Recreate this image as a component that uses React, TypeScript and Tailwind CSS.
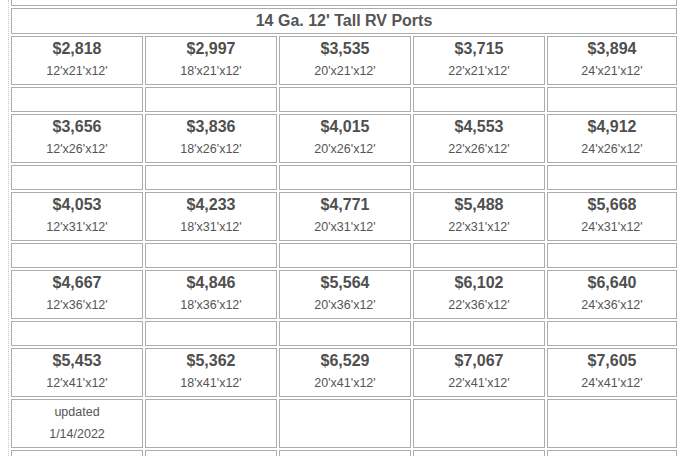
import React from "react";

const rows: { p: string; s: string }[][] = [
  [
    { p: "$2,818", s: "12'x21'x12'" },
    { p: "$2,997", s: "18'x21'x12'" },
    { p: "$3,535", s: "20'x21'x12'" },
    { p: "$3,715", s: "22'x21'x12'" },
    { p: "$3,894", s: "24'x21'x12'" },
  ],
  [
    { p: "$3,656", s: "12'x26'x12'" },
    { p: "$3,836", s: "18'x26'x12'" },
    { p: "$4,015", s: "20'x26'x12'" },
    { p: "$4,553", s: "22'x26'x12'" },
    { p: "$4,912", s: "24'x26'x12'" },
  ],
  [
    { p: "$4,053", s: "12'x31'x12'" },
    { p: "$4,233", s: "18'x31'x12'" },
    { p: "$4,771", s: "20'x31'x12'" },
    { p: "$5,488", s: "22'x31'x12'" },
    { p: "$5,668", s: "24'x31'x12'" },
  ],
  [
    { p: "$4,667", s: "12'x36'x12'" },
    { p: "$4,846", s: "18'x36'x12'" },
    { p: "$5,564", s: "20'x36'x12'" },
    { p: "$6,102", s: "22'x36'x12'" },
    { p: "$6,640", s: "24'x36'x12'" },
  ],
  [
    { p: "$5,453", s: "12'x41'x12'" },
    { p: "$5,362", s: "18'x41'x12'" },
    { p: "$6,529", s: "20'x41'x12'" },
    { p: "$7,067", s: "22'x41'x12'" },
    { p: "$7,605", s: "24'x41'x12'" },
  ],
];

const cell = "border border-[#acacac] bg-white";
const grid =
  "grid grid-cols-[132px_132px_132px_132px_130px] gap-[2px]";

export default function App() {
  return (
    <div
      className="w-[680px] h-[456px] overflow-hidden bg-white"
      style={{ fontFamily: '"Liberation Sans", Arial, sans-serif' }}
    >
      <div className="ml-[8px] border-l border-dotted border-[#c8c8c8] pl-[2px] h-[456px]">
        <div className="flex flex-col gap-[2px] w-[666px]">
          <div className="h-[6px] border-x border-b border-[#acacac]" />
          <div
            className={`${cell} h-[26px] flex items-center justify-center text-[16px] font-bold text-[#555]`}
          >
            14 Ga. 12' Tall RV Ports
          </div>
          {rows.map((r, i) => (
            <React.Fragment key={i}>
              <div className={grid}>
                {r.map((c) => (
                  <div
                    key={c.p}
                    className={`${cell} h-[49px] pb-[2px] flex flex-col items-center justify-center`}
                  >
                    <div className="text-[16px] font-bold leading-[23px] text-[#4f4f4f]">
                      {c.p}
                    </div>
                    <div className="text-[12.5px] leading-[23px] text-[#555]">
                      {c.s}
                    </div>
                  </div>
                ))}
              </div>
              {i < rows.length - 1 && (
                <div className={grid}>
                  {r.map((c) => (
                    <div key={c.p} className={`${cell} h-[25px]`} />
                  ))}
                </div>
              )}
            </React.Fragment>
          ))}
          <div className={grid}>
            <div
              className={`${cell} h-[49px] pb-[2px] flex flex-col items-center justify-center text-[12.5px] leading-[22px] text-[#555]`}
            >
              <div>updated</div>
              <div>1/14/2022</div>
            </div>
            <div className={`${cell} h-[49px]`} />
            <div className={`${cell} h-[49px]`} />
            <div className={`${cell} h-[49px]`} />
            <div className={`${cell} h-[49px]`} />
          </div>
          <div className={grid}>
            {[0, 1, 2, 3, 4].map((k) => (
              <div key={k} className={`${cell} h-[20px]`} />
            ))}
          </div>
        </div>
      </div>
    </div>
  );
}
